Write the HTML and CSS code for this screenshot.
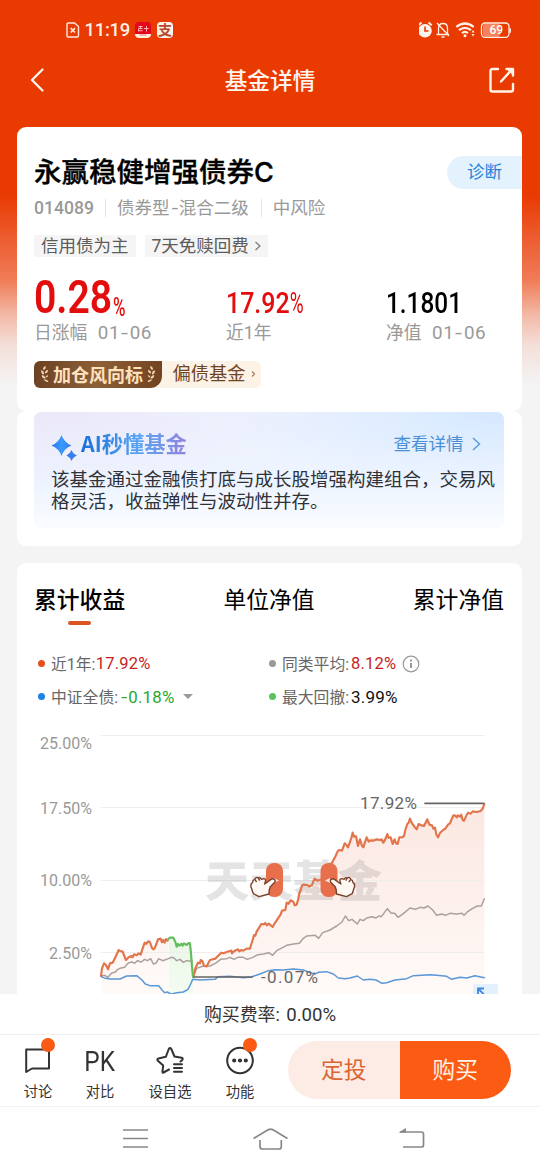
FILE: index.html
```html
<!DOCTYPE html>
<html lang="zh-CN">
<head>
<meta charset="utf-8">
<title>基金详情</title>
<link rel="stylesheet" href="styles.css">
</head>
<body>
<div class="screen">
  <header class="status">
    <svg class="st-sim" width="14" height="16" viewBox="0 0 14 16" fill="none" stroke="#ffeadb" stroke-width="1.4"><path d="M1 2.200Q1 1 2.200 1H8.500L12.500 4.500V13.500Q12.500 15 11.300 15H2.200Q1 15 1 13.700Z"/><path d="M4.700 6.200L9 10.500M9 6.200L4.700 10.500" stroke-width="1.700"/></svg>
    <span class="st-time">11:19</span>
    <svg class="st-app" width="16" height="16" viewBox="0 0 16 16"><rect width="16" height="16" rx="4" fill="#e3061c"/><path d="M0 12H16Q16 16 12 16H4Q0 16 0 12Z" fill="#fff0e4"/><path d="M3.500 4.500H7.500M5.500 4.500V6.500M3.500 6.500H7.500M4 8.700H7.500M3.500 6.500V9.500M9 6.500H13.500M11.500 4V9.500" stroke="#ffc9c0" stroke-width=".9" fill="none"/><path d="M4.500 13H11.500" stroke="#e8796e" stroke-width="1"/></svg>
    <span class="st-pay">支</span>
    <div class="st-right">
      <svg width="92" height="18" viewBox="0 0 92 18" fill="none" stroke="#fff0e5" stroke-width="1.300">
        <g transform="translate(-1.500 0)"><circle cx="7.500" cy="9.800" r="6.800" fill="#fff6ee" stroke="none"/><path d="M.8 4.300L4 1.600M11 1.600L14.200 4.300" stroke-width="2"/><path d="M7.500 5.500V10H11" stroke="#e93a02" stroke-width="1.600"/>
        <path d="M21 13.500V7Q21 2.500 25.500 2.500T30 7V13.500M19 13.500H31.500M24 16H27M19.500 2L31.500 15"/>
        <path d="M38.800 6Q47.500-1 56.200 6M41.500 9.200Q47.500 4.500 53.500 9.200M44.500 12.200Q47.500 9.700 50.500 12.200" stroke-width="2.200"/><circle cx="47.500" cy="14.700" r="1.500" fill="#fff0e5" stroke="none"/><path d="M54 11.500L55.500 9L57 11.500ZM54 13L55.500 15.500L57 13Z" fill="#fff0e5" stroke="none"/></g>
        <rect x="64" y="2.700" width="17" height="13" rx="2.500" fill="#f58260" stroke="none"/><rect x="62.500" y="2" width="27.500" height="14.300" rx="3.500"/>
        <text x="70.500" y="13.300" class="battery">69</text>
      </svg><i class="bat-tip"></i>
    </div>
  </header>
  <nav class="navbar">
    <svg width="16" height="26" viewBox="0 0 16 26" fill="none" stroke="#fff3ea" stroke-width="2.400" stroke-linecap="round" stroke-linejoin="round"><path d="M13.500 2.500L3 13L13.500 23.500"/></svg>
    <h1>基金详情</h1>
    <svg width="26" height="26" viewBox="0 0 26 26" fill="none" stroke="#fff3ea" stroke-width="2.400" stroke-linecap="round" stroke-linejoin="round"><path d="M9 2H3.500Q1.500 2 1.500 4V22.500Q1.500 24.500 3.500 24.500H22Q24 24.500 24 22.500V17M12 14.500L22.500 3M17.500 2H24V8.500"/><path d="M18.500 2H24V7.500Z" fill="#fff3ea" stroke-width="1"/></svg>
  </nav>

  <main>
    <section class="card summary">
      <div class="title-row"><h2>永赢稳健增强债券<span>C</span></h2><a class="diagnose">诊断</a></div>
      <div class="meta"><b>014089</b><span>债券型<em>-</em>混合二级</span><span>中风险</span></div>
      <div class="tags"><span class="tag tag-a">信用债为主</span><span class="tag tag-b">7天免赎回费<svg width="8" height="10" viewBox="0 0 8 10" fill="none" stroke="#777" stroke-width="1.200"><path d="M1.500 1L6 5L1.500 9"/></svg></span></div>
      <div class="metrics">
        <div class="metric"><div class="val red"><span class="num big">0.28</span><span class="num unit">%</span></div><div class="lab">日涨幅<i>01<em>-</em>06</i></div></div>
        <div class="metric"><div class="val red"><span class="num">17.92<small>%</small></span></div><div class="lab">近1年</div></div>
        <div class="metric"><div class="val"><span class="num nav">1.1801</span></div><div class="lab">净值<i>01<em>-</em>06</i></div></div>
      </div>
      <div class="badge">
        <div class="badge-l">
          <svg width="8" height="18" viewBox="0 0 8 18" fill="#f7d8b4"><path d="M5 1Q1 2 2.500 5Q5 4 5 1ZM.3 5Q-.3 9 3 9.500Q3.500 6.500.3 5ZM7 5Q3.500 5.500 4 8.500Q7 8 7 5ZM.8 10Q1 14 4.500 13.500Q4.500 11 .8 10ZM7 10Q4.500 10.500 4.500 12.500Q7 12.500 7 10ZM2.500 14.500Q5 17.500 7.500 16.800Q6.500 14 2.500 14.500Z"/></svg>
          <b>加仓风向标</b>
          <svg class="flip" width="8" height="18" viewBox="0 0 8 18" fill="#f7d8b4"><path d="M5 1Q1 2 2.500 5Q5 4 5 1ZM.3 5Q-.3 9 3 9.500Q3.500 6.500.3 5ZM7 5Q3.500 5.500 4 8.500Q7 8 7 5ZM.8 10Q1 14 4.500 13.500Q4.500 11 .8 10ZM7 10Q4.500 10.500 4.500 12.500Q7 12.500 7 10ZM2.500 14.500Q5 17.500 7.500 16.800Q6.500 14 2.500 14.500Z"/></svg>
        </div>
        <span>偏债基金</span><svg width="5" height="8" viewBox="0 0 5 8" fill="none" stroke="#a07a58" stroke-width="1.100"><path d="M1 1.500L3.500 4L1 6.500"/></svg>
      </div>
    </section>

    <section class="card ai">
      <div class="ai-panel">
        <div class="ai-head">
          <svg width="26" height="26" viewBox="0 0 26 26"><defs><linearGradient id="spark" x2="1"><stop stop-color="#2877ed"/><stop offset=".5" stop-color="#3a99ff"/><stop offset="1" stop-color="#397be8"/></linearGradient></defs><path d="M10.500 0Q13 7.500 20.500 10.500Q13 13.500 10.500 21Q8 13.500 .5 10.500Q8 7.500 10.500 0Z" fill="url(#spark)"/><path d="M20.500 15Q22 19 26 20.500Q22 22 20.500 26Q19 22 15.500 20.500Q19 19 20.500 15Z" fill="#397fe8"/></svg>
          <h3>AI秒懂基金</h3>
          <a>查看详情</a><svg width="9" height="14" viewBox="0 0 9 14" fill="none" stroke="#529ae0" stroke-width="1.400"><path d="M1 1L7.500 7L1 13"/></svg>
        </div>
        <p>该基金通过金融债打底与成长股增强构建组合，交易风格灵活，收益弹性与波动性并存。</p>
      </div>
    </section>

    <section class="card perf">
      <div class="tabs"><span class="on">累计收益</span><span>单位净值</span><span>累计净值</span></div>
      <div class="legend">
        <div><i class="dot o"></i>近1年:<b class="up year">17.92%</b></div>
        <div><i class="dot g"></i>同类平均:<b class="up">8.12%</b><svg class="info" width="18" height="18" viewBox="0 0 18 18" fill="none" stroke="#999"><circle cx="9" cy="9" r="7.800" stroke-width="1.200"/><path d="M9 8V13M9 4.500V6.500" stroke-width="2"/></svg></div>
        <div><i class="dot b"></i>中证全债:<b class="down"><em>-</em>0.18%</b><i class="caret"></i></div>
        <div><i class="dot n"></i>最大回撤:<b class="wide">3.99%</b></div>
      </div>
      <svg class="chart" width="505" height="274" viewBox="17 720 505 274">
        <defs>
          <linearGradient id="warm" x1="0" x2="0" y1="0" y2="1"><stop stop-color="#fbe7e1"/><stop offset=".5" stop-color="#fdf0ec"/><stop offset="1" stop-color="#fffbf9"/></linearGradient>
          <linearGradient id="fall" x1="0" x2="0" y1="0" y2="1"><stop stop-color="#e9f7e6"/><stop offset="1" stop-color="#f5fcf3"/></linearGradient>
        </defs>
        <path class="grid" d="M101 735.500H484.500M101 807.500H484.500"/>
        <g transform="translate(30 720) scale(.333333)" fill="none" stroke-linejoin="round">
          <path fill="url(#warm)" d="M213 830V770L222 730L234 748L248 728L266 690L278 695L288 720L312 703L332 704L344 668L360 665L366 684L374 685L384 658L400 668L414 655V830ZM490 830V770L504 728L518 724L522 738L540 720L574 698L604 692L660 686L676 645L694 612L716 612L728 620L756 572L766 570L770 548L782 541L798 556L810 510L820 494L846 495L854 476L880 476L905 430L924 392L936 392L944 370L958 380L968 340L984 378L1010 352L1054 358L1072 342L1088 372L1102 374L1122 348L1140 296L1160 328L1192 298L1214 325L1224 352L1246 326L1270 286L1294 284L1302 302L1328 274L1352 273L1363 252V830Z"/>
          <path fill="url(#fall)" d="M416 830V655L430 652L440 680L480 670L490 770V830Z"/>
        </g>
        <path class="grid" d="M101 880.500H484.500M101 952.500H484.500"/>
        <text class="watermark" x="205" y="897" textLength="177" lengthAdjust="spacingAndGlyphs">天天基金</text>
        <g transform="translate(30 720) scale(.333333)" fill="none" stroke-linejoin="round" stroke-linecap="round">
          <path stroke="#aaa09e" stroke-width="4.500" d="M213 768L224 766L234 772L244 760L256 756L262 749L270 745L284 742L290 734L296 728L306 726L314 730L322 722L334 726L344 718L352 722L362 716L370 732L378 730L386 716L398 722L410 718L424 712L432 714L440 722L450 718L460 727L470 722L486 724M490 770L500 745L520 738L540 738L556 730L572 718L590 716L600 712L612 718L624 712L640 712L652 718L668 712L684 704L700 702L716 698L728 706L740 692L752 686L770 676L790 672L808 670L820 655L830 648L856 646L866 655L878 638L900 630L920 618L936 606L946 588L956 602L966 598L974 605L982 612L990 598L1000 602L1010 594L1026 590L1038 594L1046 588L1054 590L1072 566L1084 580L1094 580L1104 592L1116 584L1128 574L1140 564L1156 568L1170 562L1182 564L1194 558L1208 570L1220 586L1236 582L1246 586L1260 580L1280 582L1296 580L1302 586L1314 574L1328 565L1342 558L1354 558L1363 536"/>
          <path stroke="#5b96d6" stroke-width="4.500" d="M213 770L226 775L240 777L270 777L290 768L320 767L336 780L346 792L360 797L386 797L396 810L404 818L412 816L424 823L440 818L460 816L474 808L482 792L488 778L510 780L555 778L565 770L600 769L640 773L664 771L690 762L715 752L735 749L760 750L790 747L820 750L840 758L855 762L865 757L890 755L910 762L925 774L945 776L960 774L982 768L1000 780L1020 778L1038 780L1056 790L1070 788L1095 780L1130 776L1150 767L1200 764L1220 766L1250 769L1265 778L1290 772L1310 774L1335 767L1363 773"/>
          <path class="rise" d="M213 768L216 745L222 730L228 735L234 748L240 730L248 728L256 712L266 690L270 693L278 695L283 708L288 720L296 712L304 708L308 712L312 703L320 706L326 700L332 704L338 685L344 668L350 671L354 664L360 667L366 684L370 688L374 685L384 658L392 656L396 667L400 660L404 668L408 657L413 662"/>
          <path class="rise" d="M490 770L496 745L504 728L510 730L512 720L518 724L522 738L530 739L540 720L556 716L566 706L574 698L580 700L590 696L604 692L606 700L612 694L624 688L628 694L634 690L640 692L650 686L660 686L664 672L668 660L672 645L676 647L680 635L686 625L694 612L702 613L706 609L710 616L716 611L728 621L734 610L744 595L752 583L756 572L766 570L770 548L776 551L782 541L790 545L794 556L800 554L804 540L808 520L812 510L816 497L820 494L832 495L838 500L846 495L850 484L854 476L862 482L880 476L888 462L895 450L905 430L915 412L922 396L926 390L936 392L944 370L950 376L954 382L960 366L964 354L968 338L972 350L978 349L984 378L990 358L996 378L1000 382L1004 370L1010 352L1016 365L1022 361L1030 362L1040 358L1050 360L1054 358L1060 368L1066 358L1072 342L1076 354L1082 352L1088 372L1094 358L1098 370L1103 372L1108 352L1116 352L1122 348L1126 330L1132 312L1136 308L1140 296L1146 310L1154 321L1160 328L1166 312L1174 316L1182 318L1188 306L1192 298L1198 314L1206 316L1210 326L1215 323L1219 343L1224 352L1230 339L1240 329L1246 326L1254 314L1260 310L1264 300L1270 286L1276 287L1280 292L1284 286L1290 290L1294 284L1298 300L1302 302L1308 289L1314 278L1322 281L1328 274L1340 276L1352 273L1358 266L1363 252"/>
          <path stroke="#62bd5a" stroke-width="6.500" d="M415 657L420 653L430 653L436 665L440 680L444 672L448 677L454 671L458 677L462 670L470 675L476 669L480 670L483 700L486 740L489 770"/>
          <path stroke="#666" stroke-width="5" stroke-linecap="butt" d="M490 771H668M1183 250H1363"/>
        </g>
        <g class="axis"><text x="92" y="748.500">25.00%</text><text x="92" y="813.500">17.50%</text><text x="92" y="886">10.00%</text><text x="92" y="958.500">2.50%</text></g>
        <g class="mark"><text x="360" y="809" textLength="57">17.92%</text><text x="261" y="983" textLength="57">-0.07%</text></g>
        <g fill="#e86f4b"><rect x="266" y="863" width="17" height="34" rx="8"/><rect x="320.500" y="863" width="17" height="34" rx="8"/></g>
        <path d="M274 878L279 880.500L274 883ZM330 878L325 880.500L330 883Z" fill="#ffe1d7"/>
        <g class="hand" transform="translate(200 850) scale(.3333)"><path d="M223 88Q218 84 212 89L194 102L197 92Q197 86 191 86L184 88Q181 81 175 84Q168 80 164 88Q158 90 158 97Q151 101 153 110L160 131L177 140L207 132Q207 118 211 110L225 96Q227 92 223 88Z"/><path d="M164 88L170 96M175 84L179 92"/></g>
        <g class="hand" transform="translate(405.500 850) scale(-.3333 .3333)"><path d="M223 88Q218 84 212 89L194 102L197 92Q197 86 191 86L184 88Q181 81 175 84Q168 80 164 88Q158 90 158 97Q151 101 153 110L160 131L177 140L207 132Q207 118 211 110L225 96Q227 92 223 88Z"/><path d="M164 88L170 96M175 84L179 92"/></g>
        <path d="M473 994V986Q473 984 475 984H496Q498 984 498 986V994Z" fill="#e3f0fe"/><path d="M484 988.500H478V995M478 988.500L484.500 995" fill="none" stroke="#3f87dc" stroke-width="1.800"/>
      </svg>
    </section>
  </main>

  <footer>
    <div class="fee">购买费率: <span>0.00%</span></div>
    <div class="actions">
      <div class="tool"><svg width="32" height="30" viewBox="22 1046 32 30" fill="none" stroke="#333" stroke-width="2"><path d="M26.200 1049.500H49V1068.500H32L26.200 1072Z" stroke-linejoin="round"/></svg><span>讨论</span><i class="alert"></i></div>
      <div class="tool"><div class="pk">PK</div><span>对比</span></div>
      <div class="tool"><svg width="32" height="30" viewBox="154 1046 32 30" fill="none" stroke="#333" stroke-width="2" stroke-linejoin="round" stroke-linecap="round"><path d="M169 1069.500L163.500 1072.500Q162.200 1073 162.500 1071.500L163.200 1065.500L157.600 1060.500Q156.800 1058.900 158.500 1058.500L165.800 1056.800L168.800 1049Q170 1047 171.300 1049L174.500 1056.500L181.500 1057.700Q183.500 1058.300 182.300 1060L180.500 1061.500M174 1064.300H182M174 1068.100H182M174 1071.800H182"/></svg><span>设自选</span></div>
      <div class="tool"><svg width="32" height="30" viewBox="224 1046 32 30"><circle cx="240" cy="1060.500" r="12.800" fill="none" stroke="#333" stroke-width="2"/><path d="M234.200 1060.500h0M240 1060.500h0M245.800 1060.500h0" stroke="#333" stroke-width="4.200" stroke-linecap="round"/></svg><span>功能</span><i class="alert"></i></div>
      <div class="buy"><button>定投</button><button class="primary">购买</button></div>
    </div>
    <div class="sysnav">
      <svg width="28" height="22" viewBox="0 0 28 22" stroke="#888" stroke-width="1.700"><path d="M2 2H27M2 10.500H27M2 19H27"/></svg>
      <svg class="home" width="38" height="24" viewBox="0 0 38 24" fill="none" stroke="#888" stroke-width="1.700" stroke-linejoin="round"><path d="M1.500 11.500L16.500 2.600Q18.500 1.700 20.500 2.600L35.500 11.500M8 13V19.500Q8 22 10.500 22H27Q29.300 22 29.300 19.500V13"/></svg>
      <svg width="28" height="22" viewBox="0 0 28 22" fill="none" stroke="#888" stroke-width="1.700"><path d="M2 4H23.500Q25.500 4 25.500 6V17Q25.500 19 23.500 19H5"/><path d="M.5 4.500L8 0V4.500Z" fill="#888" stroke="none"/></svg>
    </div>
  </footer>
</div>
</body>
</html>
```

FILE: styles.css
```css
* { box-sizing: border-box; }
body { margin: 0; font-family: Roboto, "Noto Sans CJK SC", sans-serif; color: #000; }
h1, h2, h3, p { margin: 0; }
i, em { font-style: normal; }
svg { display: block; flex: none; }
.screen { width: 540px; height: 1170px; overflow: hidden; display: flex; flex-direction: column; background: linear-gradient(#e93a02 0, #e93a02 195px, #ec5a2c 235px, #f07c57 280px, #f3b9a6 315px, #f4dfd9 345px, #f4f4f4 385px); }
.status { height: 60px; flex: none; display: flex; align-items: center; padding: 0 29px 0 66px; color: #fff0e4; }
.st-time { font: 500 18.500px/20px Roboto, sans-serif; margin-left: 4.500px; width: 50.500px; letter-spacing: -.3px; }
.st-app { width: 16px; margin-right: 6px; }
.st-pay { width: 16px; height: 16px; border-radius: 4px; background: #fff4eb; color: #b5482a; font: bold 14px/15px "Noto Sans CJK SC", sans-serif; text-align: center; }
.st-right { margin-left: auto; display: flex; align-items: center; }
.bat-tip { width: 2px; height: 5px; background: #ffd9c9; border-radius: 1px; margin-left: -1.500px; }
.battery { font: 500 12px Roboto, sans-serif; fill: #fff; stroke: none; }
.navbar { height: 40px; flex: none; display: flex; align-items: center; justify-content: space-between; padding: 0 25px 0 29px; }
.navbar h1 { font: 500 22.700px/40px "Noto Sans CJK SC", sans-serif; color: #fff5ed; margin-left: 6px; }
main { flex: 1; min-height: 0; overflow: hidden; padding: 27px 18px 0 17px; }
.card { background: #fff; border-radius: 9px; }
.summary { height: 284px; padding: 27px 0 0 17px; }
.title-row { height: 34px; display: flex; align-items: center; justify-content: space-between; }
h2 { font: 500 27.500px/34px "Noto Sans CJK SC", sans-serif; white-space: nowrap; -webkit-text-stroke: .35px #000; }
h2 span { font: 500 27px/34px Inter, sans-serif; }
.diagnose { width: 75px; height: 33px; margin-top: 3px; border-radius: 17px 0 0 17px; background: #e4f2fe; color: #2583dc; font-size: 17.500px; line-height: 33px; text-align: center; }
.meta { height: 22px; margin-top: 9px; display: flex; align-items: center; font-size: 17.500px; color: #999; line-height: 22px; }
.meta b { font-weight: 500; font-size: 17.600px; width: 71px; }
.meta span { border-left: 1px solid #e5e5e5; padding-left: 11px; line-height: 18px; margin-right: 12px; }
.meta em { padding: 0 2px 0 2.500px; display: inline-block; transform: scaleX(1.350); }
.tags { margin-top: 15.500px; display: flex; gap: 9px; }
.tag { height: 22.500px; background: #f5f5f5; color: #5c5c5c; font-size: 17.500px; line-height: 22px; padding-left: 7px; display: flex; align-items: center; white-space: nowrap; }
.tag-a { width: 101.500px; }
.tag-b { width: 123px; }
.tag svg { margin-left: 5px; }
.metrics { margin-top: 18px; display: grid; grid-template-columns: 192px 160px 1fr; }
.val { height: 47px; display: flex; white-space: nowrap; font-weight: 500; }
.num { font-size: 29px; line-height: 34px; padding-top: 10.500px; transform-origin: 0 50%; transform: scaleX(.86); display: block; }
.num.nav { transform: scaleX(.84); }
.num small { font-size: 29px; font-weight: 400; display: inline-block; transform: scaleX(.76); transform-origin: 0 50%; }
.num.big { font-size: 45.500px; line-height: 42px; padding: 0; width: 79px; font-weight: 600; transform: scaleX(.86); margin-top: 1.500px; }
.num.unit { font-size: 25px; line-height: 28px; padding: 0; margin-top: 19px; transform: scaleX(.68); }
.red { color: #e30d0d; }
.lab { font-size: 17.800px; line-height: 22px; color: #999; white-space: nowrap; }
.lab i { margin-left: 10.500px; font-size: 18.800px; letter-spacing: .5px; }
.lab em { display: inline-block; transform: scaleX(1.350); margin: 0 2px; }
.badge { margin-top: 17px; width: 227px; height: 26.500px; border-radius: 6px; background: #fdf2e6; display: flex; align-items: center; overflow: hidden; font-size: 18.300px; color: #70451f; }
.badge-l { height: 27px; width: 128px; border-radius: 0 0 12px 0; background: linear-gradient(100deg, #6c4122, #8d6038 50%, #70421f); display: flex; align-items: center; justify-content: space-between; padding: 0 7px; color: #ffe1bd; }
.badge-l b { font: bold 18px/26px "Noto Sans CJK SC", sans-serif; }
.badge > span { margin: 0 5px 0 10.500px; line-height: 24px; }
.flip { transform: scaleX(-1); }
.ai { height: 135px; padding: 1px 18px 18px 17px; }
.ai-panel { height: 116px; border-radius: 7px; background: radial-gradient(ellipse at 0 0, #ebe8f8 0, rgba(235,232,248,0) 48%), radial-gradient(ellipse at 100% 0, #d5e8ff 0, rgba(213,232,255,0) 45%), linear-gradient(#f0f5ff 0, #edf4ff 60%, #fafcff 100%); padding: 19px 0 0 17px; }
.ai-head { display: flex; height: 32px; align-items: center; }
.ai-head > svg:first-child { margin-top: 2px; margin-left: -.5px; }
h3 { font: bold 21.300px/30px "Noto Sans CJK SC", sans-serif; margin-left: 4.500px; margin-top: -8px; color: transparent; background: linear-gradient(90deg, #186edc, #59a4f2 55%, #9382e0); background-clip: text; -webkit-background-clip: text; }
.ai-head a { margin: -9px 8.500px 0 auto; font-size: 17.500px; color: #4b90d7; }
.ai-head > svg:last-child { margin: -7px 23px 0 0; }
.ai p { font: 18.500px/22px "Noto Sans CJK SC", sans-serif; color: #2f3237; margin-top: 4px; width: 446px; }
.perf { margin-top: 17px; height: 520px; padding-top: 20px; }
.tabs { height: 42px; padding: 0 18px 0 17px; display: flex; justify-content: space-between; font-size: 22.800px; line-height: 36px; }
.tabs .on { font-weight: 500; display: flex; flex-direction: column; align-items: center; }
.on::after { content: ""; width: 23px; height: 4px; border-radius: 2px; background: #db5422; margin-top: 2px; }
.legend { margin: 22px 21px 0; display: grid; grid-template-columns: 231px 1fr; grid-auto-rows: 33px; height: 73px; font-size: 15.800px; color: #666; }
.legend div { display: flex; align-items: center; height: 33px; white-space: nowrap; }
.legend b { font-weight: 400; color: #111; font-size: 16.500px; letter-spacing: .2px; margin-left: 2px; }
.legend b.up { color: #c41e1e; }
.legend b.year { margin-left: .5px; }
.legend b.down { color: #28a82b; margin-left: 3.500px; font-size: 16.800px; }
.legend b.wide { font-size: 17px; }
.legend em { display: inline-block; transform: scaleX(1.300); margin-right: 2px; }
.dot { width: 7px; height: 7px; border-radius: 50%; margin: 0 6px 0 0; }
.o { background: #e64f1e; } .g { background: #999; } .b { background: #1b83e8; } .n { background: #5ac45a; }
.info { margin-left: 6px; }
.caret { border: 5px solid transparent; border-top-color: #999; border-bottom: 0; margin-left: 9px; }
.grid { stroke: #eee; stroke-width: 1; }
.watermark { font: 900 43px "Noto Sans CJK SC", sans-serif; fill: #777; opacity: .19; }
.rise { stroke: #e2754c; stroke-width: 6.500; }
.axis text { font: 16px Roboto, sans-serif; fill: #999; text-anchor: end; }
.mark text { font: 17px Roboto, sans-serif; fill: #666; }
.hand { fill: #fff9f5; stroke: #7a422b; stroke-width: 4.200; stroke-linejoin: round; }
footer { flex: none; height: 176px; background: #fff; }
.fee { height: 41px; border-bottom: 1px solid #eee; font-size: 17.900px; line-height: 41px; text-align: center; color: #333; }
.fee span { font-size: 18.600px; margin-left: 2px; }
.actions { height: 72px; border-bottom: 1px solid #f2f2f2; display: grid; grid-template-columns: 76px 48px 92px 48px 1fr; }
.tool { position: relative; display: flex; flex-direction: column; align-items: center; padding-top: 11px; font-size: 14.300px; line-height: 18px; color: #333; }
.tool span { margin-top: 6.500px; }
.pk { height: 30px; font-size: 28px; line-height: 32px; transform: scaleX(.87); }
.alert { position: absolute; width: 14px; height: 14px; border-radius: 50%; background: #fa5a14; top: 3px; left: calc(50% + 3px); }
.buy { margin: 6px 29px 0 24px; height: 58px; display: flex; border-radius: 29px; overflow: hidden; }
.buy button { flex: 1; border: 0; padding: 0 0 3px; background: #fcece5; color: #dc6534; font: 22.700px "Noto Sans CJK SC", sans-serif; }
.buy .primary { background: #fb5b13; color: #fff1e5; }
.sysnav { height: 63px; display: flex; align-items: center; justify-content: space-between; padding: 0 114px 0 121px; }
.home { margin-right: 6px; }
```
